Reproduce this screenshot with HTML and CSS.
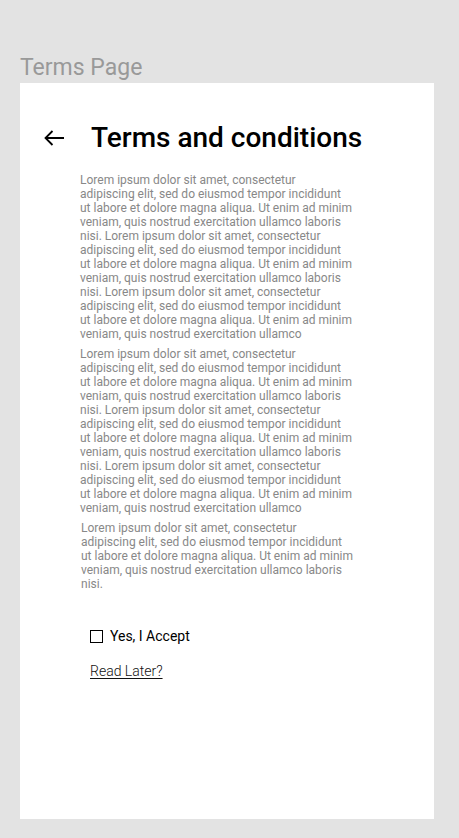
FILE: index.html
```html
<!DOCTYPE html>
<html lang="en">
<head>
<meta charset="utf-8">
<title>Terms Page</title>
<link rel="stylesheet" href="styles.css">
</head>
<body>
<div class="frame-label">Terms Page</div>
<main class="card">
  <header class="header">
    <button class="back" aria-label="Back">
      <svg width="22" height="18" viewBox="0 0 22 18" aria-hidden="true">
        <path d="M20 9H1.5M8.5 2L1.5 9l7 7" fill="none" stroke="#000" stroke-width="1.8"/>
      </svg>
    </button>
    <h1 class="title">Terms and conditions</h1>
  </header>
  <section class="terms">
    <p class="para">Lorem ipsum dolor sit amet, consectetur adipiscing elit, sed do eiusmod tempor incididunt ut labore et dolore magna aliqua. Ut enim ad minim veniam, quis nostrud exercitation ullamco laboris nisi. Lorem ipsum dolor sit amet, consectetur adipiscing elit, sed do eiusmod tempor incididunt ut labore et dolore magna aliqua. Ut enim ad minim veniam, quis nostrud exercitation ullamco laboris nisi. Lorem ipsum dolor sit amet, consectetur adipiscing elit, sed do eiusmod tempor incididunt ut labore et dolore magna aliqua. Ut enim ad minim veniam, quis nostrud exercitation ullamco</p>
    <p class="para">Lorem ipsum dolor sit amet, consectetur adipiscing elit, sed do eiusmod tempor incididunt ut labore et dolore magna aliqua. Ut enim ad minim veniam, quis nostrud exercitation ullamco laboris nisi. Lorem ipsum dolor sit amet, consectetur adipiscing elit, sed do eiusmod tempor incididunt ut labore et dolore magna aliqua. Ut enim ad minim veniam, quis nostrud exercitation ullamco laboris nisi. Lorem ipsum dolor sit amet, consectetur adipiscing elit, sed do eiusmod tempor incididunt ut labore et dolore magna aliqua. Ut enim ad minim veniam, quis nostrud exercitation ullamco</p>
    <p class="para para-last">Lorem ipsum dolor sit amet, consectetur adipiscing elit, sed do eiusmod tempor incididunt ut labore et dolore magna aliqua. Ut enim ad minim veniam, quis nostrud exercitation ullamco laboris nisi.</p>
  </section>
  <div class="actions">
    <label class="accept"><span class="box"></span><span>Yes, I Accept</span></label>
    <a class="later" href="#">Read Later?</a>
  </div>
</main>
</body>
</html>
```

FILE: styles.css
```css
* { box-sizing: border-box; }
html, body { margin: 0; padding: 0; }
body {
  background: #e3e3e3;
  font-family: Roboto, "Liberation Sans", sans-serif;
  padding-top: 55px;
  height: 838px;
  overflow: hidden;
}
.frame-label {
  margin-left: 20px;
  font-size: 23px;
  line-height: 26px;
  color: #999999;
  margin-bottom: 2px;
}
.card {
  margin-left: 20px;
  width: 414px;
  height: 736px;
  background: #ffffff;
  padding-top: 37px;
}
.header {
  display: flex;
  align-items: center;
  height: 36px;
}
.back {
  margin-left: 24px;
  padding: 0;
  border: 0;
  background: none;
  width: 22px;
  height: 18px;
  display: flex;
}
.title {
  margin: 0 0 0 25px;
  font-size: 28px;
  line-height: 36px;
  font-weight: 500;
  color: #000;
}
.terms {
  margin-top: 17px;
  margin-left: 60px;
  width: 273px;
  display: flex;
  flex-direction: column;
  gap: 6px;
}
.para {
  margin: 0;
  font-size: 12px;
  line-height: 14px;
  color: #888888;
}
.para-last { margin-left: 1px; margin-right: -1px; margin-top: 0.4px; }
.actions {
  margin-top: 37px;
  margin-left: 70px;
  display: flex;
  flex-direction: column;
  align-items: flex-start;
  gap: 19px;
}
.accept {
  display: flex;
  align-items: center;
  gap: 7px;
  font-size: 14px;
  line-height: 16px;
  color: #000;
}
.box {
  width: 13px;
  height: 13px;
  border: 1.3px solid #000;
}
.later {
  font-size: 14px;
  line-height: 16px;
  font-weight: 300;
  color: #111;
  text-decoration: underline;
  text-underline-offset: 2px;
}
```
